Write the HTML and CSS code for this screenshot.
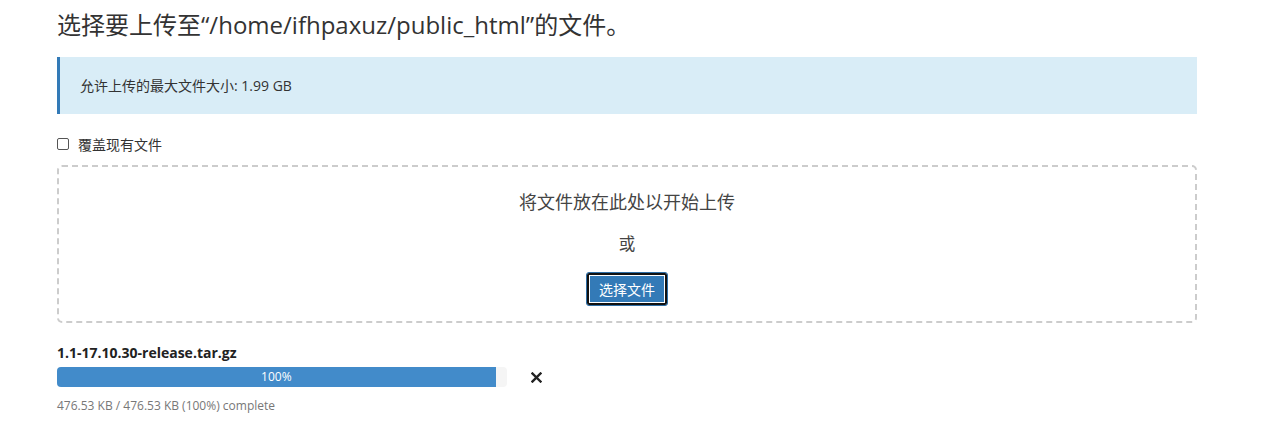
FILE: index.html
```html
<!DOCTYPE html>
<html lang="zh">
<head>
<meta charset="utf-8">
<link rel="stylesheet" href="styles.css">
</head>
<body>
<div class="page">
  <h1 class="title">选择要上传至“/home/ifhpaxuz/public_html”的文件。</h1>
  <div class="alert">允许上传的最大文件大小: 1.99 GB</div>
  <label class="overwrite"><span class="box"></span>覆盖现有文件</label>
  <div class="dropzone">
    <div class="drop-text">将文件放在此处以开始上传</div>
    <div class="or">或</div>
    <button class="btn">选择文件</button>
  </div>
  <div class="file">
    <div class="fname">1.1-17.10.30-release.tar.gz</div>
    <div class="prow">
      <div class="progress"><div class="bar" style="width:97.5%">100%</div></div>
      <svg class="close" width="11" height="11" viewBox="0 0 11 11"><path d="M1.5 1.5 L9.5 9.5 M9.5 1.5 L1.5 9.5" stroke="#222" stroke-width="2.4" stroke-linecap="square"/></svg>
    </div>
    <div class="status">476.53 KB / 476.53 KB (100%) complete</div>
  </div>
</div>
</body>
</html>
```
FILE: styles.css
```css
html, body { margin: 0; padding: 0; background: #fff; }
body { font-family: "Open Sans", "Noto Sans CJK SC", sans-serif; color: #333; }
.page { width: 1140px; margin-left: 57px; }
.title { font-size: 24px; font-weight: 400; margin: 0; padding-top: 8px; line-height: 33px; height: 49px; color: #333; }
.alert { background: #d9edf7; border-left: 3px solid #337ab7; height: 57px; box-sizing: border-box; padding-left: 20px; font-size: 14px; line-height: 57px; color: #333; }
.overwrite { display: flex; align-items: center; height: 20px; margin-top: 20px; font-size: 14px; color: #333; }
.box { width: 10px; height: 10px; border: 1px solid #555; border-radius: 2px; margin-right: 9px; margin-left: 0; }
.dropzone { margin-top: 11px; height: 158px; box-sizing: border-box; border: 2px dashed #ccc; border-radius: 5px; display: flex; flex-direction: column; align-items: center; }
.drop-text { font-size: 18px; margin-top: 22px; line-height: 26px; color: #444; }
.or { font-size: 16.5px; margin-top: 18px; line-height: 22px; color: #444; }
.btn { margin-top: 17px; width: 82px; height: 34px; flex: none; background: #337ab7; color: #fff; border: 1px solid #2e6da4; border-radius: 3px; box-shadow: inset 0 0 0 2px #111, inset 0 0 0 3px #fff; font-family: "Open Sans", "Noto Sans CJK SC", sans-serif; font-size: 14px; padding: 0; }
.file { margin-top: 20px; }
.fname { font-size: 14px; font-weight: 700; line-height: 20px; color: #222; }
.prow { display: flex; align-items: center; margin-top: 4px; }
.progress { width: 450px; height: 20px; background: #f5f5f5; border-radius: 4px; overflow: hidden; }
.bar { height: 20px; background: #428bca; color: #fff; font-size: 12px; line-height: 20px; text-align: center; }
.close { margin-left: 24px; }
.status { font-size: 12px; color: #777; margin-top: 10px; line-height: 18px; }
```
